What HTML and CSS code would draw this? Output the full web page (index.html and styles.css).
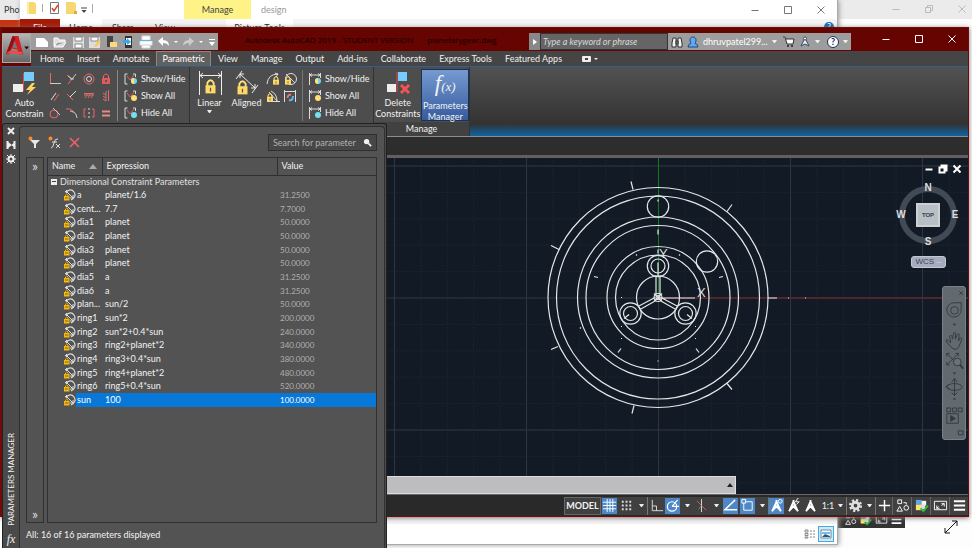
FILE: index.html
```html
<!DOCTYPE html>
<html lang="en">
<head>
<meta charset="utf-8">
<title>Autodesk AutoCAD 2019</title>
<link rel="stylesheet" href="styles.css">
</head>
<body>
<svg class="defs" aria-hidden="true">
  <symbol id="param" viewBox="0 0 12 12"><path d="M2 4C4 0 8 0 10 3s1 6-3 8" fill="none" stroke="#ddd" stroke-width="1.200"/><path d="M2 2l7 7M3 1L1 3M9 6v3H6" stroke="#ddd" fill="none"/><path d="M1.500 8V6q1-2 2.500 0v2" fill="none" stroke="#f0b000"/><path d="M0 7h5.500v4.500H0z" fill="#f5b914"/><path d="M1 9h3.500" stroke="#8a6410"/></symbol>
  <symbol id="lock" viewBox="0 0 10 12"><path d="M2.500 6V3q2.500-4 5 0v3" fill="none" stroke="#ffe07a" stroke-width="1.500"/><path d="M1 5h8v6.500H1z" fill="#ffd966"/><path d="M4.500 7h1v3h-1z" fill="#554"/></symbol>
  <symbol id="brackets" viewBox="0 0 14 14"><path d="M3.500 2H1v10h2.500M9 2h2.500v3" fill="none" stroke="#ddd"/><path d="M3 4l3 4 4-5" fill="none" stroke="#e06060"/></symbol>
  <symbol id="dim" viewBox="0 0 14 14"><path d="M1.500 1v12M1.500 3h11M12.500 1v5M4 1.500L2 3l2 1.500M10 1.500L12 3l-2 1.500" fill="none" stroke="#ddd"/></symbol>
  <symbol id="person" viewBox="0 0 16 16"><path d="M8 4L3.500 14M8 4l4.500 10M8 2v5M3 14l5-5 5 5" fill="none" stroke="#fff" stroke-width="2"/></symbol>
  <symbol id="shapes" viewBox="0 0 16 16"><path d="M3 2h4v4H3zM5 9l3 5H2zM9 5h3v2" fill="none" stroke="#fff"/><circle cx="12" cy="10.500" r="2.500" fill="none" stroke="#fff"/></symbol>
  <symbol id="hardware" viewBox="0 0 16 16"><path d="M2 2h6v5H2z" fill="#5ba7ed"/><path d="M8 3h5v5H8z" fill="#f4f4f4"/><path d="M2 7h6v6H2z" fill="#ffe36b"/><path d="M7 7h5v5H7z" fill="#ddd"/><path d="M7 11l3 3 5-6" fill="none" stroke="#31bd3f" stroke-width="2"/></symbol>
  <symbol id="full" viewBox="0 0 16 16"><path d="M1.500 3.500h13v9h-13zM9 6h3v3M4 8v3h3M12 6L9 8M4 11l2-2" fill="none" stroke="#fff"/></symbol>
  <symbol id="menu" viewBox="0 0 16 16"><path d="M2 3.500h12M2 8h12M2 12.500h12" stroke="#fff" stroke-width="2"/></symbol>
  <symbol id="min" viewBox="0 0 10 10"><path d="M1.500 5.500h7" stroke="currentColor" fill="none"/></symbol>
  <symbol id="max" viewBox="0 0 10 10"><path d="M1.500 1.500h7v7h-7z" stroke="currentColor" fill="none"/></symbol>
  <symbol id="restore" viewBox="0 0 10 10"><path d="M1.500 3.500h5v5h-5zM3.500 3.500v-2h5v5h-2" stroke="currentColor" fill="none"/></symbol>
  <symbol id="x" viewBox="0 0 10 10"><path d="M1.500 1.500l7 7M8.500 1.500l-7 7" stroke="currentColor" fill="none"/></symbol>
</svg>

<div class="desktop">
  <div class="photos"><span>Pho</span><i></i></div>
  <div class="rear-window">
    <div class="rear-title"><svg><use href="#min"/></svg><svg><use href="#restore"/></svg><svg><use href="#x"/></svg></div>
  </div>
  <div class="rear-status"><svg><use href="#shapes"/></svg><svg><use href="#hardware"/></svg><svg><use href="#full"/></svg><svg><use href="#menu"/></svg></div>

  <section class="explorer" aria-label="design">
    <div class="ex-title">
      <svg class="ex-tools" viewBox="0 0 76 16"><path d="M7 2h7l2 2v10H7z" fill="#f7d772"/><path d="M7 2h2v12H7z" fill="#ffeb9b"/><path d="M22.500 4v8M72.500 4v9" stroke="#aaa"/><path d="M30.500 2.500h8v11h-8z" fill="#fff" stroke="#777"/><path d="M32 8l2 3 4-6" fill="none" stroke="#d34b22" stroke-width="1.500"/><path d="M46 2h8l2 2v10H46z" fill="#f7d772"/><path d="M54 11h3v3h-3z" fill="#e0ad38"/><path d="M61 8h6" stroke="#444"/><path d="M61.500 10h5L64 13z" fill="#444"/></svg>
      <span class="ex-manage">Manage</span><span class="ex-name">design</span>
      <div class="ex-controls"><button aria-label="Minimize"><svg><use href="#min"/></svg></button><button aria-label="Maximize"><svg><use href="#max"/></svg></button><button aria-label="Close"><svg><use href="#x"/></svg></button></div>
    </div>
    <div class="ex-tabs"><a class="file" href="#">File</a><a class="on" href="#">Home</a><a href="#">Share</a><a href="#">View</a><a class="pic" href="#">Picture Tools</a><span class="ex-help">?</span></div>
    <div class="ex-foot">
      <svg viewBox="0 0 12 10"><path d="M1 1h3v2H1zM1 4.500h3v2H1zM1 8h3v1H1zM6 2h2M9 2h2M6 5h2M9 5h2M6 8h2M9 8h2" fill="none" stroke="#888"/></svg>
      <button aria-label="Large icons"><svg viewBox="0 0 12 10"><path d="M1 1h10v8H1z" fill="#fff" stroke="#789"/><path d="M2 3h8v2H2z" fill="#6cc0ef"/><path d="M2 8l3-3 5 2v1z" fill="#245d82"/></svg></button>
    </div>
  </section>

  <main class="cad">
    <header class="cad-head">
      <button class="app" aria-label="Application menu"><svg viewBox="0 0 28 29"><path d="M3 21L10 2h6l5 19h-5l-1-5-6-1-2 6z" fill="#d21f26"/><path d="M3 21L10 2l3 2-6 14z" fill="#8e1119"/><path d="M12 7l3 8-5-1z" fill="#777"/><path d="M3 20l5-3 13 2-2 2z" fill="#f04a4a"/><path d="M22 13h5l-2.500 3z" fill="#111"/></svg></button>
      <div class="cad-title">
        <div class="qat">
          <svg viewBox="0 0 187 17"><path d="M5 5h8l4 4v5H5z" fill="#fff"/><path d="M23 13V5h4l1 2h6v2h-8l-3 5h9l3-5" fill="#ddd" stroke="#fff"/><path d="M42 4h11v11H42z" fill="#ddd"/><path d="M44 4h7v4h-7zM44 11h7v4h-7z" fill="#fff" stroke="#888"/><path d="M58 4h11v11H58z" fill="#ddd"/><path d="M60 4h7v4h-7z" fill="#fff" stroke="#888"/><path d="M63 13l5-6 2 2-5 5z" fill="#ffc75a"/><path d="M76 3h6v11h-6z" fill="#444"/><path d="M79 9h7v5h-7z" fill="#ffd97c"/><path d="M94 3h7v12h-7z" fill="#333"/><path d="M95 5h5v7h-5z" fill="#fff"/><path d="M92 7h4V5l4 4-4 3v-2h-4z" fill="#37a8ed"/><path d="M111 3h8v4h-8zM109 8h12v4h-12zM111 12h8v3h-8z" fill="#fff" stroke="#ddd"/><path d="M109 7h12v1h-12z" fill="#58b9ee"/><path d="M127 8l5-4v3q6 0 6 6-2-3-6-3v3z" fill="#fff"/><path d="M143 8h4l-2 2zM168 8h4l-2 2z" fill="#fff"/><path d="M163 8l-5-4v3q-6 0-6 6 2-3 6-3v3z" fill="#ccc"/><path d="M178 6h6v1h-6zM178 9h6l-3 4z" fill="#fff"/></svg>
        </div>
        <div class="title-text"><span>Autodesk AutoCAD 2019 - STUDENT VERSION</span><span>planetarygear.dwg</span></div>
        <span class="play"></span>
        <input class="search" type="text" placeholder="Type a keyword or phrase" aria-label="Type a keyword or phrase">
        <div class="account">
          <svg class="s12" viewBox="0 0 12 12"><path d="M2 2h3v9H1V7zM7 2h3l1 5v4H7zM5 5h2v3H5z" fill="#f4f4f4" stroke="#333"/></svg>
          <svg class="s12" viewBox="0 0 12 12"><path d="M1 11q0-3 3-3.500C2 4 3 1 6 1s4 3 2 6.500q3 .5 3 3.500z" fill="#62a7f2" stroke="#234984"/></svg>
          <button class="user">dhruvpatel299...</button><i class="caret"></i>
          <svg class="s12 cart" viewBox="0 0 12 12"><path d="M0 1h2l2 7h6l1-5H3" fill="#fff" stroke="#333"/><circle cx="5" cy="10" r="1" fill="#222"/><circle cx="9" cy="10" r="1" fill="#222"/></svg>
          <svg class="s12" viewBox="0 0 12 12"><path d="M6 2L2 10l4-2 4 2z" fill="#eee" stroke="#334a66"/><circle cx="6" cy="2.500" r="1.500" fill="#fff" stroke="#334a66"/></svg><i class="caret"></i>
          <button class="help" aria-label="Help">?</button><i class="caret"></i>
        </div>
        <div class="controls"><button aria-label="Minimize"><svg><use href="#min"/></svg></button><button aria-label="Maximize"><svg><use href="#max"/></svg></button><button aria-label="Close"><svg><use href="#x"/></svg></button></div>
      </div>
      <nav class="tabs"><a href="#">Home</a><a href="#">Insert</a><a href="#">Annotate</a><a class="on" href="#">Parametric</a><a href="#">View</a><a href="#">Manage</a><a href="#">Output</a><a href="#">Add-ins</a><a href="#">Collaborate</a><a href="#">Express Tools</a><a href="#">Featured Apps</a><svg viewBox="0 0 18 8"><rect x="1" y="1" width="9" height="6" rx="1" fill="#eee"/><path d="M4 3h3v2H4z" fill="#444"/><path d="M13 3h4l-2 2z" fill="#eee"/></svg></nav>
    </header>

    <div class="ribbon">
      <section class="panel geometric">
        <button class="big"><svg viewBox="0 0 26 24"><path d="M12 1h10v9H12z" fill="#75ccff"/><path d="M1 13h10v8H1z" fill="#eee"/><path d="M11.500 2v18" stroke="#e34b4b"/><path d="M20 12l-6 7h4l-3 5 9-8h-4l3-4z" fill="#ffd45e"/></svg>Auto<br>Constrain</button>
        <div class="marks">
          <svg viewBox="0 0 12 12"><path d="M1.500 0v10" stroke="#e66" /><path d="M1 10.500h11" stroke="#ccc"/></svg>
          <svg viewBox="0 0 12 12"><path d="M1 2l4 3M6 6l-4 5" stroke="#e66"/><path d="M2 3l4 3 4-5M4 6h4" fill="none" stroke="#ccc"/></svg>
          <svg viewBox="0 0 12 12"><circle cx="6" cy="6" r="5" fill="none" stroke="#e66"/><circle cx="6" cy="6" r="2.500" fill="none" stroke="#ddd"/></svg>
          <svg viewBox="0 0 12 12"><path d="M3.500 5V3q2.500-4 5 0v2" fill="none" stroke="#e66"/><path d="M2 5h8v6H2z" fill="#e25959"/><path d="M5 7h2v2H5z" fill="#555"/></svg>
          <svg viewBox="0 0 12 12"><path d="M2 10l5-7" stroke="#ddd"/><path d="M5 11l5-7" stroke="#e66"/></svg>
          <svg viewBox="0 0 12 12"><path d="M1 4l6 6" stroke="#e66"/><path d="M4 7l6-6" stroke="#ddd"/></svg>
          <svg viewBox="0 0 12 12"><path d="M1 3.500h10M2 8l2-3M5 8l2-3M8 8l2-3" stroke="#e66"/><path d="M1 5h10" stroke="#c77"/></svg>
          <svg viewBox="0 0 12 12"><path d="M8.500 0v11M3 3l3 2M3 6l3 2M3 9l3 2" stroke="#e66"/><path d="M6 1v10" stroke="#b77"/></svg>
          <svg viewBox="0 0 12 12"><circle cx="5" cy="7" r="4" fill="none" stroke="#e66"/><path d="M4 1l7 7" stroke="#ccc"/></svg>
          <svg viewBox="0 0 12 12"><path d="M0 2q7-1 7 4" fill="none" stroke="#e66"/><path d="M4 4q6 0 7 7" fill="none" stroke="#ccc"/></svg>
          <svg viewBox="0 0 12 12"><path d="M3 2H1v8h2M9 2h2v8H9" fill="none" stroke="#e66"/><path d="M6 1v2M6 5v2M6 9v2" stroke="#ddd"/></svg>
          <svg viewBox="0 0 12 12"><path d="M2 4.500h8M2 8.500h8" stroke="#e88" stroke-width="2"/></svg>
        </div>
        <div class="shows">
          <button><svg viewBox="0 0 14 14"><use href="#brackets"/><circle cx="10" cy="9" r="3" fill="#73d6ef"/><path d="M10 6a3 3 0 0 0 0 6z" fill="#ffe07a"/></svg>Show/Hide</button>
          <button><svg viewBox="0 0 14 14"><use href="#brackets"/><circle cx="10" cy="9" r="3" fill="#ffdf73"/></svg>Show All</button>
          <button><svg viewBox="0 0 14 14"><use href="#brackets"/><circle cx="10" cy="9" r="3" fill="#73e0ef"/></svg>Hide All</button>
        </div>
      </section>
      <section class="panel dimensional">
        <button class="big linear"><svg viewBox="0 0 26 26"><path d="M2.500 1v24M24.500 1v24M3 5.500h21M6 3L3 5.500 6 8M21 3l3 2.500L21 8" fill="none" stroke="#eee"/><use href="#lock" x="7" y="9" width="13" height="15"/></svg>Linear<i class="caret"></i></button>
        <button class="big"><svg viewBox="0 0 26 26"><path d="M2 9l6-8M18 23l6-8M6 4l15 14M6 8V4h4M17 18h4v-4" fill="none" stroke="#eee"/><use href="#lock" x="2" y="10" width="13" height="15"/></svg>Aligned</button>
        <div class="locks">
          <svg viewBox="0 0 14 14"><path d="M1 12Q2 2 12 2M9 1l3 1-2 3" fill="none" stroke="#ddd"/><use href="#lock" x="6" y="4" width="8" height="9"/></svg>
          <svg viewBox="0 0 14 14"><circle cx="8" cy="7" r="5.500" fill="none" stroke="#ddd"/><path d="M3 2l9 9" stroke="#ddd"/><use href="#lock" x="1" y="4" width="8" height="9"/></svg>
          <svg viewBox="0 0 14 14"><path d="M3 3l8 9M5 2q6 3 6 10" fill="none" stroke="#ddd"/><path d="M1 12.500h13" stroke="#ddd"/><use href="#lock" x="0" y="4" width="8" height="9"/></svg>
          <svg viewBox="0 0 14 14"><path d="M1.500 1v12M12.500 1v12M2 2.500h10" stroke="#ddd"/><path d="M4.500 9Q5 5 8 6" fill="none" stroke="#f07070" stroke-width="2"/><path d="M10 7q0 5-4 4" fill="none" stroke="#55b8ee" stroke-width="2"/></svg>
        </div>
        <div class="shows">
          <button><svg viewBox="0 0 14 14"><use href="#dim"/><circle cx="10" cy="9" r="3" fill="#73d6ef"/><path d="M10 6a3 3 0 0 0 0 6z" fill="#ffe07a"/></svg>Show/Hide</button>
          <button><svg viewBox="0 0 14 14"><use href="#dim"/><circle cx="10" cy="9" r="3" fill="#ffdf73"/></svg>Show All</button>
          <button><svg viewBox="0 0 14 14"><use href="#dim"/><circle cx="10" cy="9" r="3" fill="#73e0ef"/></svg>Hide All</button>
        </div>
      </section>
      <section class="panel manage">
        <div class="manage-body">
          <button class="big"><svg viewBox="0 0 26 24"><path d="M13 1h9v9h-9z" fill="#75ccff"/><path d="M2 13h9v8H2z" fill="#eee"/><path d="M12 1v20" stroke="#e34b4b"/><path d="M16 14l8 8M24 14l-8 8" stroke="#f25353" stroke-width="3"/></svg>Delete<br>Constraints</button>
          <button class="big active"><em><b>f</b>(x)</em>Parameters<br>Manager</button>
        </div>
        <h2>Manage</h2>
      </section>
    </div>
    <div class="filetabs"></div>

    <div class="canvas">
      <svg class="drawing" viewBox="2 158 966 337" preserveAspectRatio="xMidYMid slice">
        <defs>
          <pattern id="minor" x="658" y="298" width="26.400" height="26.400" patternUnits="userSpaceOnUse"><path d="M0 .5h26.400M.5 0v26.400" stroke="#242734" stroke-dasharray="1 2"/></pattern>
          <pattern id="major" x="658" y="298" width="132" height="132" patternUnits="userSpaceOnUse"><path d="M0 .5h132M.5 0v132" stroke="#2f343d"/></pattern>
        </defs>
        <rect x="0" y="150" width="972" height="350" fill="url(#minor)"/><rect x="0" y="150" width="972" height="350" fill="url(#major)"/>
        <path d="M658.500 150v148" stroke="#157a1f"/><path d="M658 298.500h310" stroke="#80202a"/>
        <g fill="none" stroke="#e4e6e8" stroke-width="1.200">
          <circle cx="658" cy="298" r="110"/><circle cx="658" cy="298" r="101.500"/><circle cx="658" cy="298" r="80.500"/><circle cx="658" cy="298" r="72"/><circle cx="658" cy="298" r="51"/><circle cx="658" cy="298" r="42.500"/><circle cx="658" cy="298" r="21.500"/>
          <circle cx="658" cy="207" r="10.700"/><circle cx="707" cy="262" r="10.700"/>
          <circle cx="658" cy="266.500" r="10.700"/><circle cx="658" cy="266.500" r="7"/>
          <circle cx="630.500" cy="314" r="10.700"/><circle cx="630.500" cy="314" r="7"/>
          <circle cx="685.500" cy="314" r="10.700"/><circle cx="685.500" cy="314" r="7"/>
          <circle cx="658" cy="298" r="4"/><circle cx="658" cy="298" r="2"/>
          <path d="M656 296v-20M660 296v-20M655 298l-17 9M656 301l-16 9M661 298l17 9M660 301l16 9M658 277v-14M629 315l-5 4M629 315l-1 1M687 315l5 4M658 298.500h37M654 294l8 8M662 294l-8 8"/>
          <path d="M768 298.500h9M788 298.500h1M805 298.500h1M633 190l-2-8M727 212l5-7M559 250l-8-4M558 347l-7 3M634 406l-2 8M727 384l5 6M658 230v5M658 250v4M658 200v2M594 277l4 1M719 278l4-1M621 349l-3 4M696 349l3 4M636 255l1 1M679 255l1 1M621 298h1M621 327h1M621 339h1M695 327h1M695 339h1M658 361v1M580 329l1-1"/>
        </g>
        <g class="axis"><text x="659" y="258">Y</text><text x="697" y="297">X</text></g>
      </svg>
      <div class="doc-controls"><button aria-label="Minimize drawing"><svg><use href="#min"/></svg></button><button aria-label="Restore drawing"><svg><use href="#restore"/></svg></button><button aria-label="Close drawing"><svg><use href="#x"/></svg></button></div>
      <div class="cube"><b>N</b><b>W</b><button>TOP</button><b>E</b><b>S</b></div>
      <button class="wcs">WCS <span>--</span></button>
      <div class="navbar">
        <svg viewBox="0 0 23 154" fill="none" stroke="#333b42"><path d="M17 2l4 4M21 2l-4 4"/><path d="M12 14h7v7a7.500 7.500 0 1 1-7-7z"/><circle cx="12" cy="22" r="4"/><path d="M10 36h4l-2 2zM10 87h4l-2 2zM10 114h4l-2 2z" fill="#333b42" stroke="none"/><path d="M8 60q-8-9-3-7l3 3-1-7q2-3 3 3l1-6q2-3 2 1v5l2-5q2-2 2 1l-1 6 2-3q3-1 1 3l-3 7q-3 4-8-1z"/><path d="M4 67l12 12M16 67L4 79M4 70v-3h3M13 67h3v3M4 76v3h3"/><circle cx="15" cy="76" r="4" fill="#69747a"/><path d="M18 79l3 4" stroke-width="2"/><path d="M12 94v17M9 97l3-4 3 4M9 108l3 3 3-3"/><ellipse cx="12" cy="102" rx="8" ry="3.500"/><path d="M6 99l-3 3 4 2"/><path d="M4 124h4v4H4zM10 124h4v4h-4zM16 124h4v4h-4zM4 130h12v10H4z"/><path d="M8 132v6l5-3z" fill="#333b42"/><path d="M16 148h5v4h-5z"/></svg>
      </div>
      <div class="command"><input type="text" aria-label="Command line"><i></i></div>
    </div>

    <footer class="status">
      <button class="model">MODEL</button>
      <button class="on" aria-label="Grid"><svg viewBox="0 0 16 16"><path d="M5.500 1v14M8.500 1v14M11.500 1v14M1 4.500h14M1 8h14M1 11.500h14" stroke="#fff"/></svg></button>
      <button aria-label="Snap"><svg viewBox="0 0 16 16"><path d="M3 4h10M3 8h10M3 12h10" stroke="#ddd" stroke-width="2" stroke-dasharray="2 2"/></svg></button><button class="drop" aria-label="Snap settings"><i class="caret"></i></button>
      <button class="sep" aria-label="Ortho"><svg viewBox="0 0 16 16"><path d="M3.500 2v11.500H15M4 8.500h4v5" fill="none" stroke="#ddd"/></svg></button>
      <button class="on" aria-label="Polar"><svg viewBox="0 0 16 16"><circle cx="7.500" cy="9" r="5" fill="none" stroke="#fff" stroke-width="1.300"/><path d="M7.500 9H15M7.500 9l6-7" fill="none" stroke="#fff" stroke-width="1.300"/></svg></button><button class="drop" aria-label="Polar settings"><i class="caret"></i></button>
      <button aria-label="Isometric"><svg viewBox="0 0 16 16"><path d="M3 3l10 10" stroke="#e25a5a"/><path d="M8 1v14" stroke="#ddd"/><path d="M5 12l3-4" stroke="#5a5"/></svg></button><button class="drop" aria-label="Isometric settings"><i class="caret"></i></button>
      <button class="on" aria-label="Tracking"><svg viewBox="0 0 16 16"><path d="M13 2L2 12.500h13" fill="none" stroke="#fff" stroke-width="1.500"/></svg></button>
      <button class="on" aria-label="Object snap"><svg viewBox="0 0 16 16"><path d="M4 4h9v9H4z" fill="none" stroke="#fff"/><path d="M2 1.500h4v4H2z" fill="#5a92cc" stroke="#fff"/></svg></button><button class="drop" aria-label="Object snap settings"><i class="caret"></i></button>
      <button class="on sep" aria-label="Annotation visibility"><svg viewBox="0 0 16 16"><use href="#person"/><circle cx="12" cy="3.500" r="2" fill="#5a92cc" stroke="#fff"/></svg></button>
      <button aria-label="Auto scale"><svg viewBox="0 0 16 16"><use href="#person"/><path d="M13 0l-3 4h4l-3 3" fill="none" stroke="#fff"/></svg></button>
      <button aria-label="Annotation scale"><svg viewBox="0 0 16 16"><use href="#person"/></svg></button>
      <button class="scale">1:1 <i class="caret"></i></button>
      <button class="sep" aria-label="Workspace"><svg viewBox="0 0 16 16"><circle cx="8" cy="8" r="5.500" fill="none" stroke="#ddd" stroke-width="3" stroke-dasharray="2.300 2"/><circle cx="8" cy="8" r="3.500" fill="none" stroke="#ddd" stroke-width="3"/></svg></button><button class="drop" aria-label="Workspace settings"><i class="caret"></i></button>
      <button class="sep" aria-label="Monitor"><svg viewBox="0 0 16 16"><path d="M8 2v12M2 8h12" stroke="#fff" stroke-width="1.500"/></svg></button>
      <button class="wide" aria-label="Isolate"><svg><use href="#shapes"/></svg></button>
      <button class="wide" aria-label="Hardware"><svg><use href="#hardware"/></svg></button>
      <button class="wide" aria-label="Clean screen"><svg><use href="#full"/></svg></button>
      <button class="wide" aria-label="Customize"><svg><use href="#menu"/></svg></button>
    </footer>
  </main>

  <aside class="palette" aria-label="Parameters Manager">
    <div class="spine">
      <button aria-label="Close palette"><svg viewBox="0 0 10 10"><path d="M2 2l6 6M8 2L2 8" stroke="#eee" stroke-width="2"/></svg></button>
      <button aria-label="Auto-hide"><svg viewBox="0 0 10 10"><path d="M1.500 1v8M8.500 1v8" stroke="#eee" stroke-width="2"/><path d="M2 2l4 3-4 3M8 3L5 5l3 2z" fill="#eee"/></svg></button>
      <button aria-label="Properties"><svg viewBox="0 0 10 10"><circle cx="5" cy="5" r="2.500" fill="none" stroke="#eee" stroke-width="2"/><path d="M1 1l2 2M9 1L7 3M1 9l2-2M9 9L7 7M5 0v2M5 8v2M0 5h2M8 5h2" stroke="#eee"/></svg></button>
      <span>PARAMETERS MANAGER</span>
      <em>fx</em>
    </div>
    <div class="sheet">
      <div class="tools">
        <button aria-label="New filter"><svg viewBox="0 0 13 13"><path d="M2 4h10L8 8v4H6V8z" fill="#e8e8e8"/><circle cx="2.500" cy="2.500" r="2" fill="#ff8b24"/></svg></button>
        <button class="fx" aria-label="New user parameter"><svg viewBox="0 0 13 13"><path d="M10 3Q7 2 6 7t-3 5M4 6h5M8 8l4 4M12 8l-4 4" fill="none" stroke="#ddd"/><circle cx="2.500" cy="2.500" r="2" fill="#ff8b24"/></svg></button>
        <button aria-label="Delete"><svg viewBox="0 0 13 13"><path d="M2 2l9 9M11 2l-9 9" stroke="#ee6464" stroke-width="1.500"/></svg></button>
        <div class="find"><input type="text" placeholder="Search for parameter" aria-label="Search for parameter"><svg viewBox="0 0 10 10"><circle cx="4" cy="4" r="3" fill="#f2f2f2"/><path d="M6 6l3 3" stroke="#f2f2f2" stroke-width="2"/></svg></div>
      </div>
      <div class="body">
        <div class="filters"><button aria-label="Expand filters">»</button><button aria-label="Expand filter tree">»</button></div>
        <div class="list">
          <table>
            <colgroup><col class="c1"><col class="c2"><col></colgroup>
            <thead><tr><th>Name<i></i></th><th>Expression</th><th>Value</th></tr></thead>
            <tbody>
              <tr class="group"><td colspan="3"><b></b>Dimensional Constraint Parameters</td></tr>
              <tr><td><svg><use href="#param"/></svg>a</td><td>planet/1.6</td><td>31.2500</td></tr>
              <tr><td><svg><use href="#param"/></svg>cent...</td><td>7.7</td><td>7.7000</td></tr>
              <tr><td><svg><use href="#param"/></svg>dia1</td><td>planet</td><td>50.0000</td></tr>
              <tr><td><svg><use href="#param"/></svg>dia2</td><td>planet</td><td>50.0000</td></tr>
              <tr><td><svg><use href="#param"/></svg>dia3</td><td>planet</td><td>50.0000</td></tr>
              <tr><td><svg><use href="#param"/></svg>dia4</td><td>planet</td><td>50.0000</td></tr>
              <tr><td><svg><use href="#param"/></svg>dia5</td><td>a</td><td>31.2500</td></tr>
              <tr><td><svg><use href="#param"/></svg>dia6</td><td>a</td><td>31.2500</td></tr>
              <tr><td><svg><use href="#param"/></svg>plan...</td><td>sun/2</td><td>50.0000</td></tr>
              <tr><td><svg><use href="#param"/></svg>ring1</td><td>sun*2</td><td>200.0000</td></tr>
              <tr><td><svg><use href="#param"/></svg>ring2</td><td>sun*2+0.4*sun</td><td>240.0000</td></tr>
              <tr><td><svg><use href="#param"/></svg>ring3</td><td>ring2+planet*2</td><td>340.0000</td></tr>
              <tr><td><svg><use href="#param"/></svg>ring4</td><td>ring3+0.4*sun</td><td>380.0000</td></tr>
              <tr><td><svg><use href="#param"/></svg>ring5</td><td>ring4+planet*2</td><td>480.0000</td></tr>
              <tr><td><svg><use href="#param"/></svg>ring6</td><td>ring5+0.4*sun</td><td>520.0000</td></tr>
              <tr class="selected"><td><svg><use href="#param"/></svg>sun</td><td>100</td><td>100.0000</td></tr>
            </tbody>
          </table>
        </div>
      </div>
      <p>All: 16 of 16 parameters displayed</p>
    </div>
  </aside>
  <svg class="resize" viewBox="0 0 14 14"><path d="M1 13L13 1M1 8v5h5M8 1h5v5" fill="none" stroke="#111"/></svg>
</div>
</body>
</html>
```

FILE: styles.css
```css
* { box-sizing: border-box; }
body { margin: 0; font: 9px/11px Lato, "Open Sans", sans-serif; color: #f2f2f2; }
button { border: 0; padding: 0; background: none; color: inherit; font: inherit; }
input { border: 0; font: inherit; min-width: 0; }
a { color: inherit; text-decoration: none; }
svg { display: block; flex: none; }
.defs { position: absolute; width: 0; height: 0; }
.caret { flex: none; border: 2px solid transparent; border-top: 3px solid #eee; border-bottom: 0; width: 5px; height: 3px; }
.desktop { position: relative; height: 100vh; overflow: hidden; background: #fdfdfd; }

/* Windows behind */
.photos { position: absolute; left: 0; top: 0; width: 20px; background: #e9e9e9; color: #333; line-height: 20px; padding-left: 4px; overflow: hidden; }
.photos i { display: block; height: 8px; margin-left: -4px; background: #c8320f; }
.rear-window { position: absolute; left: 838px; right: 0; top: 0; bottom: 0; background: #fdfdfd; }
.rear-title { display: flex; justify-content: flex-end; gap: 23px; height: 19px; padding: 4px 5px; background: #ebebeb; color: #bbb; }
.rear-title svg { width: 10px; height: 10px; }
.rear-status { position: absolute; left: 838px; bottom: 20px; width: 67px; height: 18px; padding-left: 4px; display: flex; align-items: center; justify-content: space-evenly; background: #333; }
.rear-status svg { width: 13px; height: 13px; }
.explorer { position: absolute; left: 20px; right: 134px; top: 0; bottom: 3px; background: #fff; border: solid #aaa; border-width: 0 1px 1px 0; box-shadow: 1px 0 5px #999; display: flex; flex-direction: column; justify-content: space-between; color: #555; }
.ex-title { display: flex; height: 19px; line-height: 19px; }
.ex-tools { width: 76px; height: 16px; margin-right: 88px; }
.ex-manage { width: 67px; background: #fff387; text-align: center; color: #444; }
.ex-name { padding-left: 10px; color: #999; flex: 1; }
.ex-controls { display: flex; gap: 23px; padding-right: 11px; color: #777; }
.ex-controls svg { width: 10px; height: 10px; }
.ex-tabs { display: flex; flex: 1; line-height: 17px; background: #f4f4f4; color: #222; text-align: center; }
.ex-tabs a { width: 42px; height: 12px; }
.ex-tabs .file { width: 40px; background: #a81a06; color: #fff; }
.ex-tabs .on { background: #fff; }
.ex-tabs .pic { width: 67px; background: #fff; margin-left: 40px; }
.ex-help { margin: 3px 3px 0 auto; width: 10px; height: 10px; border-radius: 50%; background: #126bc0; color: #fff; line-height: 10px; }
.ex-foot { flex: none; display: flex; justify-content: flex-end; align-items: center; gap: 2px; height: 20px; padding-right: 3px; background: #fff; }
.ex-foot svg { width: 12px; height: 10px; }
.ex-foot button { width: 16px; height: 16px; display: grid; place-items: center; background: #cdeafa; border: 1px solid #48a9df; }

/* Main window */
.cad { position: absolute; inset: 27px 3px 31px 0; border: solid #750b08; border-width: 1px 1px 1px 2px; background: #650400; box-shadow: 0 1px 5px #777; display: flex; flex-direction: column; }
.cad-head { flex: none; display: grid; grid-template: 23px 15px / 29px minmax(0, 1fr); background: #650400; }
.app { grid-row: 1 / 3; margin-top: 5px; height: 30px; background: linear-gradient(#b5b5b5, #666); border: 1px solid #aaa; z-index: 1; }
.app svg { width: 27px; height: 28px; }
.cad-title { display: flex; align-items: flex-end; }
.qat, .account { background: #9d9d9d; height: 17px; margin-bottom: 1px; }
.qat svg { width: 187px; height: 17px; }
.title-text { flex: 1; display: flex; gap: 14px; padding-left: 27px; color: #140000; font: 8px/22px "Open Sans", sans-serif; white-space: nowrap; }
.play { width: 11px; height: 17px; margin-bottom: 1px; background: #888; display: grid; place-items: center; }
.play::before { content: ""; border: 3px solid transparent; border-left: 4px solid #fff; border-right: 0; }
.search { width: 128px; height: 17px; margin-bottom: 1px; background: #656565; border: 1px solid #333; color: #ddd; font-style: italic; padding: 0 2px; }
.search::placeholder { color: #d8d8d8; opacity: 1; }
.account { width: 183px; display: flex; align-items: center; gap: 4px; padding: 0 3px; color: #fff; }
.s12 { width: 12px; height: 12px; }
.cart { margin-left: 2px; }
.help { flex: none; width: 12px; height: 12px; margin-left: auto; border-radius: 50%; background: #fff; border: 1px solid #235; color: #124; font-weight: bold; line-height: 10px; }
.controls { display: flex; gap: 23px; padding: 0 11px 7px 30px; color: #fff; }
.controls svg { width: 10px; height: 10px; }
.tabs { display: flex; gap: 1px; grid-column: 2; padding-left: 3px; background: #454545; line-height: 14px; white-space: nowrap; align-items: center; }
.tabs a { padding: 0 6px; }
.tabs .on { background: #606060; border: 1px solid #888; border-bottom: 0; padding: 0 5px; color: #fff; }
.tabs svg { width: 18px; height: 8px; margin-left: 12px; }
.ribbon { flex: none; height: 71px; display: flex; border-top: 1px solid #315f8d; border-bottom: 1px solid #8a8c90; background: linear-gradient(#525252, #333 57px, #12609a 68px); }
.panel { display: flex; padding: 3px 0; background: #4d4d4d; border-right: 1px solid #333; }
.big { display: flex; flex-direction: column; align-items: center; text-align: center; }
.big svg { width: 26px; height: 26px; flex: none; margin-bottom: 1px; }
.geometric { width: 188px; padding-left: 2px; }
.geometric .big { width: 41px; }
.marks { display: grid; grid-template-columns: repeat(4, 17px); grid-auto-rows: 17px; width: 73px; height: 51px; padding-left: 1px; border-right: 1px solid #888; align-items: center; justify-items: center; }
.marks svg { width: 12px; height: 12px; }
.shows button { display: flex; align-items: center; gap: 3px; height: 17px; white-space: nowrap; }
.shows svg { width: 14px; height: 14px; }
.geometric .shows { padding-left: 6px; }
.dimensional { width: 184px; padding-left: 1px; }
.dimensional .big { width: 37px; }
.linear .caret { margin-top: 2px; }
.locks { display: grid; grid-template-columns: repeat(2, 17px); grid-auto-rows: 17px; width: 38px; height: 51px; padding-left: 1px; border-right: 1px solid #777; align-items: center; }
.locks svg { width: 14px; height: 14px; }
.dimensional .shows { padding-left: 5px; }
.manage { flex-direction: column; width: 96px; padding: 2px 0 0; justify-content: space-between; }
.manage-body { display: flex; }
.manage .big { width: 48px; height: 52px; padding-top: 1px; }
.manage .active { background: linear-gradient(#769ad0, #365b9e); border: 1px solid #1b3258; padding: 0; }
.active em { font: italic 13px/27px "Liberation Serif", serif; }
.active b { font-size: 23px; font-weight: normal; }
.manage h2 { margin: 0; font-size: 9px; font-weight: normal; line-height: 14px; text-align: center; background: #414141; }
.filetabs { flex: none; height: 21px; background: #2d2d2d; border-bottom: 3px solid #625e62; }
.canvas { flex: 1; min-height: 0; position: relative; background: #121b25; }
.drawing { width: 100%; height: 100%; }
.axis { font: 13px "Liberation Sans", sans-serif; fill: #ddd; }
.doc-controls { position: absolute; top: 6px; right: 6px; display: flex; gap: 4px; color: #fff; }
.doc-controls svg { width: 10px; height: 10px; stroke-width: 2; }
.cube { position: absolute; right: 11px; top: 28px; width: 58px; height: 58px; border: 6px solid #424b55; border-radius: 50%; display: grid; grid-template-columns: 10px 24px 10px; grid-template-rows: 10px 24px 10px; justify-content: center; align-content: center; place-items: center; font: bold 10px/10px "Liberation Sans", sans-serif; color: #ddd; }
.cube b:first-child, .cube b:last-child { grid-column: 2; }
.cube b:first-child { margin-top: -20px; }
.cube b:last-child { margin-bottom: -20px; }
.cube b:nth-child(2) { grid-column: 1; margin-left: -20px; }
.cube b:nth-child(4) { margin-right: -20px; }
.cube button { width: 24px; height: 24px; background: #b7c0c4; border: 2px solid #d0d0d0; color: #3a4248; font: bold 6px "Liberation Sans", sans-serif; }
.wcs { position: absolute; right: 22px; top: 98px; width: 35px; height: 12px; border-radius: 3px; background: #a6acbd; color: #3c4456; font: 8px/10px "Liberation Sans", sans-serif; border: 1px solid #c4c8d0; }
.wcs span { color: #ddd; }
.navbar { position: absolute; right: 2px; top: 128px; width: 24px; height: 154px; border-radius: 3px; background: #626a70; border: 1px solid #7b8187; }
.navbar svg { width: 22px; height: 152px; }
.command { position: absolute; left: 384px; bottom: 0; width: 350px; height: 18px; display: flex; align-items: center; background: #bdbdc0; border: 1px solid #ddd; }
.command input { flex: 1; background: none; }
.command i { border: 3px solid transparent; border-bottom: 4px solid #222; border-top: 0; margin-right: 2px; }
.status { flex: none; height: 22px; display: flex; justify-content: flex-end; align-items: center; background: #292929; border-top: 1px solid #666; }
.status button { flex: none; width: 17px; height: 18px; display: grid; place-items: center; background: #404040; }
.status button svg { width: 15px; height: 15px; }
.status .model { width: 37px; border: 1px solid #666; font-weight: bold; }
.status .on { background: #4d87c5; border: 1px solid #424242; }
.status .drop { width: 12px; }
.status .scale { width: 27px; display: flex; align-items: center; justify-content: center; gap: 4px; }
.status .sep { border-left: 1px solid #777; }
.status .wide { width: 19px; border-left: 1px solid #666; }
.resize { position: absolute; right: 14px; bottom: 14px; width: 14px; height: 14px; }

/* Parameters palette */
.palette { position: absolute; left: 2px; top: 123px; bottom: 0; width: 385px; display: flex; background: #4a4a4a; border: solid #222; border-width: 1px 1px 0; border-radius: 3px 3px 0 0; }
.spine { width: 16px; display: flex; flex-direction: column; align-items: center; gap: 4px; padding-top: 2px; }
.spine svg { width: 10px; height: 10px; }
.spine span { writing-mode: vertical-rl; transform: rotate(180deg); margin-top: auto; font-size: 8px; line-height: 12px; white-space: nowrap; }
.spine em { font: italic 12px/18px "Liberation Serif", serif; }
.sheet { flex: 1; min-width: 0; margin: 2px 1px 0 0; padding: 7px 7px 0 6px; display: flex; flex-direction: column; background: #535353; border: solid #303030; border-width: 1px 1px 0; border-radius: 4px 4px 0 0; }
.tools { flex: none; display: flex; align-items: center; gap: 7px; height: 17px; margin-bottom: 6px; padding-left: 2px; }
.tools svg { width: 13px; height: 13px; }
.find { margin-left: auto; display: flex; align-items: center; width: 109px; height: 17px; padding-right: 4px; background: #474747; border: 1px solid #303030; }
.find input { flex: 1; background: none; color: #ddd; padding: 0 4px; }
.find input::placeholder { color: #b0b0b0; opacity: 1; }
.find svg { width: 9px; height: 9px; }
.body { flex: 1; min-height: 0; display: flex; gap: 3px; }
.filters { width: 18px; display: flex; flex-direction: column; justify-content: space-between; border: 1px solid #303030; color: #ddd; }
.filters button { font-size: 14px; line-height: 16px; }
.list { flex: 1; border: 1px solid #303030; }
table { width: 100%; height: 249px; border-collapse: collapse; table-layout: fixed; }
.c1 { width: 54px; }
.c2 { width: 175px; }
td, th { padding: 0; text-align: left; font-weight: normal; white-space: nowrap; line-height: 12px; }
thead tr { height: 17px; }
th { border-bottom: 1px solid #303030; padding-left: 4px; }
th + th { border-left: 1px solid #303030; }
th i { float: right; margin: 4px 5px 0 0; border: 4px solid transparent; border-bottom: 5px solid #aaa; border-top: 0; }
.group { height: 13px; color: #e0e0e0; }
.group b { display: inline-block; width: 6px; height: 6px; margin: 0 3px 0 3px; border: solid #eee; border-width: 2px 1px 3px; background: #444; }
td svg { display: inline-block; vertical-align: top; width: 12px; height: 12px; margin: 0 1px 0 16px; }
td + td { padding-left: 3px; }
td:last-child:not(:first-child) { color: #b0b0b0; font-size: 8px; }
.selected td, .selected td:last-child:not(:first-child) { background: #0878d8; color: #fff; }
.selected td:first-child { background: linear-gradient(to right, transparent 28px, #0878d8 28px); }
.sheet p { margin: 0; height: 25px; line-height: 23px; flex: none; }
```
